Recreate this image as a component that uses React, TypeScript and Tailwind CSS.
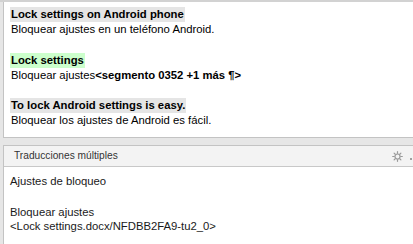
import React from "react";

function Gear() {
  return (
    <svg width="11" height="11" viewBox="0 0 24 24" fill="none" stroke="#9a9a9a" strokeWidth="2.6" strokeLinecap="round">
      <circle cx="12" cy="12" r="5.5" />
      <line x1="12" y1="1.5" x2="12" y2="5" />
      <line x1="12" y1="19" x2="12" y2="22.5" />
      <line x1="1.5" y1="12" x2="5" y2="12" />
      <line x1="19" y1="12" x2="22.5" y2="12" />
      <line x1="4.6" y1="4.6" x2="7" y2="7" />
      <line x1="17" y1="17" x2="19.4" y2="19.4" />
      <line x1="4.6" y1="19.4" x2="7" y2="17" />
      <line x1="17" y1="7" x2="19.4" y2="4.6" />
    </svg>
  );
}

export default function App() {
  return (
    <div
      className="w-[413px] h-[244px] bg-[#e6e6e6] flex flex-col overflow-hidden text-black"
      style={{ fontFamily: '"Liberation Sans", Arial, sans-serif' }}
    >
      <div className="h-[2px] bg-[#d2d2d2] shrink-0" />
      <div className="ml-[3px] h-[136px] shrink-0 bg-white border-l border-b border-[#c3c3c3] pt-[5px] pl-[7px] text-[11.3px] leading-[15.2px]">
        <div>
          <span className="inline-block -ml-[1px] px-[1px] bg-[#e5e5e5] font-bold">Lock settings on Android phone</span>
        </div>
        <div>Bloquear ajustes en un teléfono Android.</div>
        <div className="h-[15.2px]" />
        <div>
          <span className="inline-block -ml-[1px] px-[1px] bg-[#ccffcc] font-bold">Lock settings</span>
        </div>
        <div>
          Bloquear ajustes<span className="font-bold">&lt;segmento 0352 +1 más ¶&gt;</span>
        </div>
        <div className="h-[15.2px]" />
        <div>
          <span className="inline-block -ml-[1px] px-[1px] bg-[#e5e5e5] font-bold">To lock Android settings is easy.</span>
        </div>
        <div>Bloquear los ajustes de Android es fácil.</div>
      </div>
      <div className="h-[7px] shrink-0" />
      <div className="ml-[3px] flex-1 bg-white border-l border-t border-[#c3c3c3] flex flex-col">
        <div className="h-[21px] shrink-0 bg-[#f3f3f3] border-b border-[#c8c8c8] flex items-center pl-[10px] pr-[1px]">
          <span className="text-[10.2px] text-[#333333] flex-1">Traducciones múltiples</span>
          <span className="mr-[7px] flex items-center"><Gear /></span>
          <span className="w-[2px] h-[2px] bg-[#a0a0a0] mt-[6px]" />
        </div>
        <div className="pl-[6px] pt-[7px] text-[11.3px] leading-[14.5px] text-[#1a1a1a]">
          <div>Ajustes de bloqueo</div>
          <div className="h-[16px]" />
          <div>Bloquear ajustes</div>
          <div>&lt;Lock settings.docx/NFDBB2FA9-tu2_0&gt;</div>
        </div>
      </div>
    </div>
  );
}
